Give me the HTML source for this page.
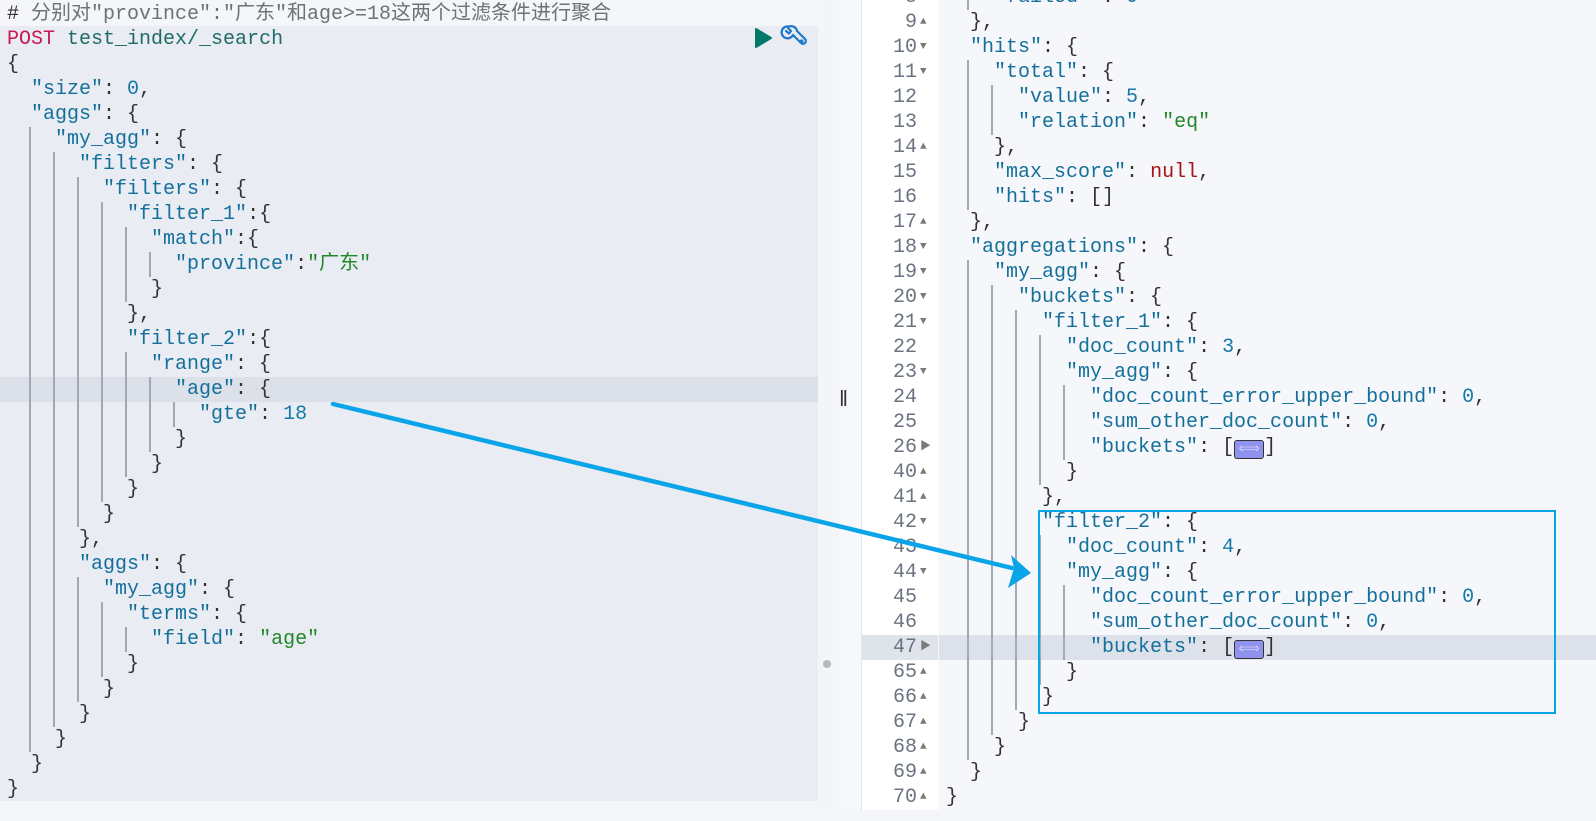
<!DOCTYPE html>
<html><head><meta charset="utf-8">
<style>
body{margin:0;width:1596px;height:821px;background:#f4f6f9;position:relative;overflow:hidden;font-family:"Liberation Mono","Noto Sans CJK SC",monospace;font-size:20px;}
.p{position:absolute}
.l{position:absolute;white-space:pre;height:25px;line-height:25px;}
.g{position:absolute;width:2px;background:#a3a8b4}
.k{color:#14709b}.n{color:#1479a8}.s{color:#22862a}.b{color:#333}.nl{color:#a31515}
.ln{position:absolute;left:862px;width:55px;text-align:right;color:#6b7280;white-space:pre;height:25px;line-height:25px}
.f{position:absolute;left:920px;color:#7a7a7a;font-size:11px;height:25px;line-height:25px}
.cw{display:inline-block;width:30px;height:19px;background:#8f92ee;border:1.5px solid #333;border-radius:3px;vertical-align:-1px;color:#c9cbfa;font-size:15px;line-height:17px;text-align:center;box-sizing:border-box}
</style></head><body>
<!-- left panel -->
<div class="p" style="left:0;top:26px;width:818px;height:775px;background:#e9ecf3"></div>
<div class="p" style="left:0;top:376.5px;width:818px;height:25px;background:#dce0e9"></div>
<div class="p" style="left:818px;top:0;width:21px;height:810px;background:#f3f5f9"></div>
<!-- right panel -->
<div class="p" style="left:839px;top:0;width:23px;height:810px;background:#f7f8fb"></div>
<div class="p" style="left:861px;top:0;width:1px;height:810px;background:#e3e6ec"></div>
<div class="p" style="left:862px;top:0;width:76px;height:810px;background:#fff"></div>
<div class="p" style="left:938px;top:0;width:658px;height:810px;background:#f6f7fa"></div>
<div class="p" style="left:862px;top:634.5px;width:76px;height:25px;background:#dfe3ea"></div>
<div class="p" style="left:939px;top:634.5px;width:657px;height:25px;background:#dce1ea"></div>
<div class="p" style="left:839px;top:389px;font-size:22px;color:#333;font-family:'Liberation Sans',sans-serif;line-height:20px">‖</div>
<div class="p" style="left:823px;top:660px;width:8px;height:8px;border-radius:4px;background:#b4b8c0"></div>

<!-- left guides -->
<div class="g" style="left:29px;top:126.5px;height:625px"></div>
<div class="g" style="left:53px;top:151.5px;height:575px"></div>
<div class="g" style="left:77px;top:176.5px;height:350px"></div>
<div class="g" style="left:101px;top:201.5px;height:300px"></div>
<div class="g" style="left:125px;top:226.5px;height:75px"></div>
<div class="g" style="left:149px;top:251.5px;height:25px"></div>
<div class="g" style="left:125px;top:351.5px;height:125px"></div>
<div class="g" style="left:149px;top:376.5px;height:75px"></div>
<div class="g" style="left:173px;top:401.5px;height:25px"></div>
<div class="g" style="left:77px;top:576.5px;height:125px"></div>
<div class="g" style="left:101px;top:601.5px;height:75px"></div>
<div class="g" style="left:125px;top:626.5px;height:25px"></div>

<!-- left code -->
<div class="l" style="left:7px;top:1.5px;color:#6a7378"><span style="color:#333">#</span> 分别对"province":"广东"和age&gt;=18这两个过滤条件进行聚合</div>
<div class="l" style="left:7px;top:26.5px"><span style="color:#c8184f">POST</span> <span style="color:#1f6b66">test_index/_search</span></div>
<div class="l b" style="left:7px;top:51.5px">{</div>
<div class="l" style="left:7px;top:76.5px">  <span class="k">"size"</span><span class="b">: </span><span class="n">0</span><span class="b">,</span></div>
<div class="l" style="left:7px;top:101.5px">  <span class="k">"aggs"</span><span class="b">: {</span></div>
<div class="l" style="left:7px;top:126.5px">    <span class="k">"my_agg"</span><span class="b">: {</span></div>
<div class="l" style="left:7px;top:151.5px">      <span class="k">"filters"</span><span class="b">: {</span></div>
<div class="l" style="left:7px;top:176.5px">        <span class="k">"filters"</span><span class="b">: {</span></div>
<div class="l" style="left:7px;top:201.5px">          <span class="k">"filter_1"</span><span class="b">:{</span></div>
<div class="l" style="left:7px;top:226.5px">            <span class="k">"match"</span><span class="b">:{</span></div>
<div class="l" style="left:7px;top:251.5px">              <span class="k">"province"</span><span class="b">:</span><span class="s">"广东"</span></div>
<div class="l b" style="left:7px;top:276.5px">            }</div>
<div class="l b" style="left:7px;top:301.5px">          },</div>
<div class="l" style="left:7px;top:326.5px">          <span class="k">"filter_2"</span><span class="b">:{</span></div>
<div class="l" style="left:7px;top:351.5px">            <span class="k">"range"</span><span class="b">: {</span></div>
<div class="l" style="left:7px;top:376.5px">              <span class="k">"age"</span><span class="b">: {</span></div>
<div class="l" style="left:7px;top:401.5px">                <span class="k">"gte"</span><span class="b">: </span><span class="n">18</span></div>
<div class="l b" style="left:7px;top:426.5px">              }</div>
<div class="l b" style="left:7px;top:451.5px">            }</div>
<div class="l b" style="left:7px;top:476.5px">          }</div>
<div class="l b" style="left:7px;top:501.5px">        }</div>
<div class="l b" style="left:7px;top:526.5px">      },</div>
<div class="l" style="left:7px;top:551.5px">      <span class="k">"aggs"</span><span class="b">: {</span></div>
<div class="l" style="left:7px;top:576.5px">        <span class="k">"my_agg"</span><span class="b">: {</span></div>
<div class="l" style="left:7px;top:601.5px">          <span class="k">"terms"</span><span class="b">: {</span></div>
<div class="l" style="left:7px;top:626.5px">            <span class="k">"field"</span><span class="b">: </span><span class="s">"age"</span></div>
<div class="l b" style="left:7px;top:651.5px">          }</div>
<div class="l b" style="left:7px;top:676.5px">        }</div>
<div class="l b" style="left:7px;top:701.5px">      }</div>
<div class="l b" style="left:7px;top:726.5px">    }</div>
<div class="l b" style="left:7px;top:751.5px">  }</div>
<div class="l b" style="left:7px;top:776.5px">}</div>

<!-- play / wrench -->
<svg class="p" style="left:752px;top:27px" width="22" height="22" viewBox="0 0 22 22"><path d="M4 2 L19 11 L4 20 Z" fill="#00796b" stroke="#00796b" stroke-width="2" stroke-linejoin="round"/></svg>
<svg class="p" style="left:780px;top:24px" width="28" height="28" viewBox="0 0 28 28" fill="none" stroke="#1f78c8" stroke-width="2.2" stroke-linecap="round" stroke-linejoin="round"><path d="M9 2.5 A6 6 0 1 0 13 11 L21 19 A2.8 2.8 0 0 0 25 15 L17 7 A6 6 0 0 0 9 2.5 Z M8 4 L11 7 L9 9.5 L6 7"/><circle cx="21.5" cy="17.5" r="1" fill="#1f78c8"/></svg>

<!-- right guides -->
<div class="g" style="left:967px;top:0;height:9.5px"></div>
<div class="g" style="left:967px;top:59.5px;height:150px"></div>
<div class="g" style="left:991px;top:84.5px;height:50px"></div>
<div class="g" style="left:967px;top:259.5px;height:500px"></div>
<div class="g" style="left:991px;top:284.5px;height:450px"></div>
<div class="g" style="left:1015px;top:309.5px;height:400px"></div>
<div class="g" style="left:1039px;top:334.5px;height:150px"></div>
<div class="g" style="left:1063px;top:384.5px;height:75px"></div>
<div class="g" style="left:1039px;top:534.5px;height:150px"></div>
<div class="g" style="left:1063px;top:584.5px;height:75px"></div>

<!-- gutter numbers -->
<div class="ln" style="top:-15.5px">8</div>
<div class="ln" style="top:9.5px">9</div><div class="f" style="top:9.5px">▲</div>
<div class="ln" style="top:34.5px">10</div><div class="f" style="top:34.5px">▼</div>
<div class="ln" style="top:59.5px">11</div><div class="f" style="top:59.5px">▼</div>
<div class="ln" style="top:84.5px">12</div>
<div class="ln" style="top:109.5px">13</div>
<div class="ln" style="top:134.5px">14</div><div class="f" style="top:134.5px">▲</div>
<div class="ln" style="top:159.5px">15</div>
<div class="ln" style="top:184.5px">16</div>
<div class="ln" style="top:209.5px">17</div><div class="f" style="top:209.5px">▲</div>
<div class="ln" style="top:234.5px">18</div><div class="f" style="top:234.5px">▼</div>
<div class="ln" style="top:259.5px">19</div><div class="f" style="top:259.5px">▼</div>
<div class="ln" style="top:284.5px">20</div><div class="f" style="top:284.5px">▼</div>
<div class="ln" style="top:309.5px">21</div><div class="f" style="top:309.5px">▼</div>
<div class="ln" style="top:334.5px">22</div>
<div class="ln" style="top:359.5px">23</div><div class="f" style="top:359.5px">▼</div>
<div class="ln" style="top:384.5px">24</div>
<div class="ln" style="top:409.5px">25</div>
<div class="ln" style="top:434.5px">26</div><div class="f" style="top:434.5px">▶</div>
<div class="ln" style="top:459.5px">40</div><div class="f" style="top:459.5px">▲</div>
<div class="ln" style="top:484.5px">41</div><div class="f" style="top:484.5px">▲</div>
<div class="ln" style="top:509.5px">42</div><div class="f" style="top:509.5px">▼</div>
<div class="ln" style="top:534.5px">43</div>
<div class="ln" style="top:559.5px">44</div><div class="f" style="top:559.5px">▼</div>
<div class="ln" style="top:584.5px">45</div>
<div class="ln" style="top:609.5px">46</div>
<div class="ln" style="top:634.5px">47</div><div class="f" style="top:634.5px">▶</div>
<div class="ln" style="top:659.5px">65</div><div class="f" style="top:659.5px">▲</div>
<div class="ln" style="top:684.5px">66</div><div class="f" style="top:684.5px">▲</div>
<div class="ln" style="top:709.5px">67</div><div class="f" style="top:709.5px">▲</div>
<div class="ln" style="top:734.5px">68</div><div class="f" style="top:734.5px">▲</div>
<div class="ln" style="top:759.5px">69</div><div class="f" style="top:759.5px">▲</div>
<div class="ln" style="top:784.5px">70</div><div class="f" style="top:784.5px">▲</div>

<!-- right code -->
<div class="l" style="left:946px;top:-15.5px">    <span class="k">"failed"</span><span class="b"> : </span><span class="n">0</span></div>
<div class="l b" style="left:946px;top:9.5px">  },</div>
<div class="l" style="left:946px;top:34.5px">  <span class="k">"hits"</span><span class="b">: {</span></div>
<div class="l" style="left:946px;top:59.5px">    <span class="k">"total"</span><span class="b">: {</span></div>
<div class="l" style="left:946px;top:84.5px">      <span class="k">"value"</span><span class="b">: </span><span class="n">5</span><span class="b">,</span></div>
<div class="l" style="left:946px;top:109.5px">      <span class="k">"relation"</span><span class="b">: </span><span class="s">"eq"</span></div>
<div class="l b" style="left:946px;top:134.5px">    },</div>
<div class="l" style="left:946px;top:159.5px">    <span class="k">"max_score"</span><span class="b">: </span><span class="nl">null</span><span class="b">,</span></div>
<div class="l" style="left:946px;top:184.5px">    <span class="k">"hits"</span><span class="b">: []</span></div>
<div class="l b" style="left:946px;top:209.5px">  },</div>
<div class="l" style="left:946px;top:234.5px">  <span class="k">"aggregations"</span><span class="b">: {</span></div>
<div class="l" style="left:946px;top:259.5px">    <span class="k">"my_agg"</span><span class="b">: {</span></div>
<div class="l" style="left:946px;top:284.5px">      <span class="k">"buckets"</span><span class="b">: {</span></div>
<div class="l" style="left:946px;top:309.5px">        <span class="k">"filter_1"</span><span class="b">: {</span></div>
<div class="l" style="left:946px;top:334.5px">          <span class="k">"doc_count"</span><span class="b">: </span><span class="n">3</span><span class="b">,</span></div>
<div class="l" style="left:946px;top:359.5px">          <span class="k">"my_agg"</span><span class="b">: {</span></div>
<div class="l" style="left:946px;top:384.5px">            <span class="k">"doc_count_error_upper_bound"</span><span class="b">: </span><span class="n">0</span><span class="b">,</span></div>
<div class="l" style="left:946px;top:409.5px">            <span class="k">"sum_other_doc_count"</span><span class="b">: </span><span class="n">0</span><span class="b">,</span></div>
<div class="l" style="left:946px;top:434.5px">            <span class="k">"buckets"</span><span class="b">: [<span class="cw">⟺</span>]</span></div>
<div class="l b" style="left:946px;top:459.5px">          }</div>
<div class="l b" style="left:946px;top:484.5px">        },</div>
<div class="l" style="left:946px;top:509.5px">        <span class="k">"filter_2"</span><span class="b">: {</span></div>
<div class="l" style="left:946px;top:534.5px">          <span class="k">"doc_count"</span><span class="b">: </span><span class="n">4</span><span class="b">,</span></div>
<div class="l" style="left:946px;top:559.5px">          <span class="k">"my_agg"</span><span class="b">: {</span></div>
<div class="l" style="left:946px;top:584.5px">            <span class="k">"doc_count_error_upper_bound"</span><span class="b">: </span><span class="n">0</span><span class="b">,</span></div>
<div class="l" style="left:946px;top:609.5px">            <span class="k">"sum_other_doc_count"</span><span class="b">: </span><span class="n">0</span><span class="b">,</span></div>
<div class="l" style="left:946px;top:634.5px">            <span class="k">"buckets"</span><span class="b">: [<span class="cw">⟺</span>]</span></div>
<div class="l b" style="left:946px;top:659.5px">          }</div>
<div class="l b" style="left:946px;top:684.5px">        }</div>
<div class="l b" style="left:946px;top:709.5px">      }</div>
<div class="l b" style="left:946px;top:734.5px">    }</div>
<div class="l b" style="left:946px;top:759.5px">  }</div>
<div class="l b" style="left:946px;top:784.5px">}</div>

<!-- highlight box -->
<div class="p" style="left:1038px;top:510px;width:514px;height:200px;border:2px solid #0aa5e8"></div>

<!-- arrow -->
<svg class="p" style="left:0;top:0" width="1596" height="821"><line x1="333" y1="404" x2="1012" y2="568" stroke="#0aa5e8" stroke-width="4.5" stroke-linecap="round"/><path d="M1031 573 L1008 588 L1014 568 L1011 555 Z" fill="#0aa5e8"/></svg>
</body></html>
